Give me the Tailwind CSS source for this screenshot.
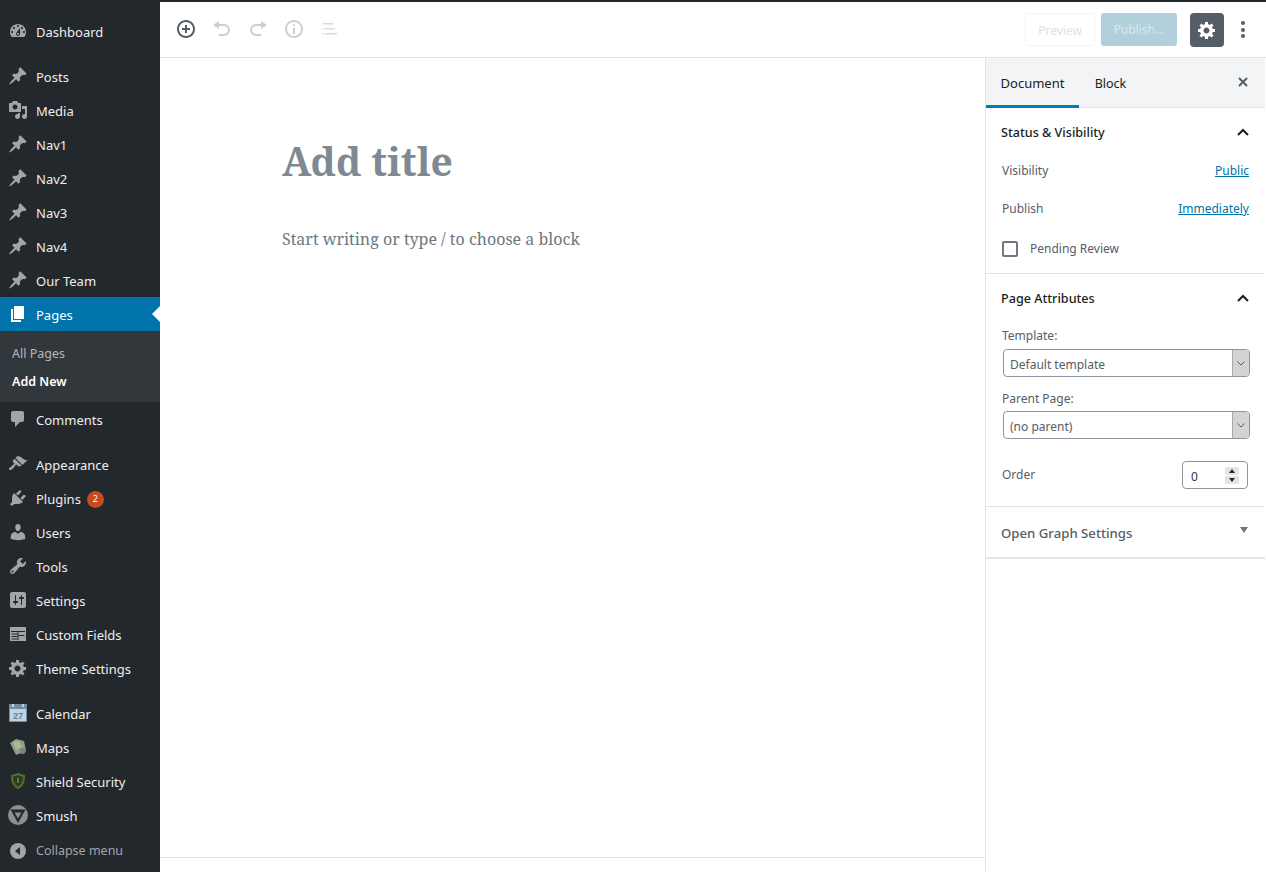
<!DOCTYPE html>
<html><head><meta charset="utf-8">
<script src="https://cdn.jsdelivr.net/npm/@tailwindcss/browser@4"></script>
</head>
<body class="m-0 overflow-hidden bg-white font-['Noto_Sans',sans-serif]">
<div class="flex h-[872px] w-[1266px] overflow-hidden">
  <!-- Admin menu -->
  <nav class="flex w-[160px] shrink-0 flex-col bg-[#23282d] pt-[14px] text-[13px] text-[#eeeeee]">
    <a class="flex h-[34px] items-center"><svg class="ml-[8px] mr-[8px] size-[20px] fill-[#a0a5aa]" viewBox="0 0 20 20"><path fill-rule="evenodd" d="M3.76 16h12.48c1.1-1.37 1.76-3.11 1.76-5 0-4.42-3.58-8-8-8s-8 3.58-8 8c0 1.89.66 3.63 1.76 5zM10 4c.55 0 1 .45 1 1s-.45 1-1 1-1-.45-1-1 .45-1 1-1zM6 6c.55 0 1 .45 1 1s-.45 1-1 1-1-.45-1-1 .45-1 1-1zm8 0c.55 0 1 .45 1 1s-.45 1-1 1-1-.45-1-1 .45-1 1-1zm-5.37 5.55L12 7v6c0 1.1-.9 2-2 2s-2-.9-2-2c0-.57.24-1.08.63-1.45zM4 10c.55 0 1 .45 1 1s-.45 1-1 1-1-.45-1-1 .45-1 1-1zm12 0c.55 0 1 .45 1 1s-.45 1-1 1-1-.45-1-1 .45-1 1-1zm-5 3c0-.55-.45-1-1-1s-1 .45-1 1 .45 1 1 1 1-.45 1-1z"/></svg><span class="mt-[4px]">Dashboard</span></a>
    <div class="h-[11px]"></div>
    <a class="flex h-[34px] items-center"><svg class="ml-[8px] mr-[8px] size-[20px] fill-[#a0a5aa]" viewBox="0 0 20 20"><path d="M10.44 3.02l1.82-1.82 6.36 6.35-1.83 1.82c-1.05-.68-2.48-.57-3.41.36l-.75.75c-.92.93-1.04 2.35-.35 3.41l-1.83 1.82-2.41-2.41-2.8 2.79c-.42.42-3.38 2.71-3.8 2.29s1.86-3.39 2.28-3.81l2.79-2.79L4.1 9.36l1.83-1.82c1.05.69 2.48.57 3.4-.36l.75-.75c.93-.92 1.05-2.35.36-3.41z"/></svg><span class="mt-[4px]">Posts</span></a>
    <a class="flex h-[34px] items-center"><svg class="ml-[8px] mr-[8px] size-[20px] fill-[#a0a5aa]" viewBox="0 0 20 20"><path fill-rule="evenodd" d="M13 11V4c0-.55-.45-1-1-1h-1.67L9 1H5L3.67 3H2c-.55 0-1 .45-1 1v7c0 .55.45 1 1 1h10c.55 0 1-.45 1-1zM7 4.5c1.38 0 2.5 1.12 2.5 2.5S8.38 9.5 7 9.5 4.5 8.38 4.5 7 5.62 4.5 7 4.5zM14 6h5v10.5c0 1.38-1.12 2.5-2.5 2.5S14 17.88 14 16.5s1.12-2.5 2.5-2.5c.17 0 .34.02.5.05V9h-3V6zm-4 8.05V13h2v3.5c0 1.38-1.12 2.5-2.5 2.5S7 17.88 7 16.5 8.12 14 9.5 14c.17 0 .34.02.5.05z"/></svg><span class="mt-[4px]">Media</span></a>
    <a class="flex h-[34px] items-center"><svg class="ml-[8px] mr-[8px] size-[20px] fill-[#a0a5aa]" viewBox="0 0 20 20"><path d="M10.44 3.02l1.82-1.82 6.36 6.35-1.83 1.82c-1.05-.68-2.48-.57-3.41.36l-.75.75c-.92.93-1.04 2.35-.35 3.41l-1.83 1.82-2.41-2.41-2.8 2.79c-.42.42-3.38 2.71-3.8 2.29s1.86-3.39 2.28-3.81l2.79-2.79L4.1 9.36l1.83-1.82c1.05.69 2.48.57 3.4-.36l.75-.75c.93-.92 1.05-2.35.36-3.41z"/></svg><span class="mt-[4px]">Nav1</span></a>
    <a class="flex h-[34px] items-center"><svg class="ml-[8px] mr-[8px] size-[20px] fill-[#a0a5aa]" viewBox="0 0 20 20"><path d="M10.44 3.02l1.82-1.82 6.36 6.35-1.83 1.82c-1.05-.68-2.48-.57-3.41.36l-.75.75c-.92.93-1.04 2.35-.35 3.41l-1.83 1.82-2.41-2.41-2.8 2.79c-.42.42-3.38 2.71-3.8 2.29s1.86-3.39 2.28-3.81l2.79-2.79L4.1 9.36l1.83-1.82c1.05.69 2.48.57 3.4-.36l.75-.75c.93-.92 1.05-2.35.36-3.41z"/></svg><span class="mt-[4px]">Nav2</span></a>
    <a class="flex h-[34px] items-center"><svg class="ml-[8px] mr-[8px] size-[20px] fill-[#a0a5aa]" viewBox="0 0 20 20"><path d="M10.44 3.02l1.82-1.82 6.36 6.35-1.83 1.82c-1.05-.68-2.48-.57-3.41.36l-.75.75c-.92.93-1.04 2.35-.35 3.41l-1.83 1.82-2.41-2.41-2.8 2.79c-.42.42-3.38 2.71-3.8 2.29s1.86-3.39 2.28-3.81l2.79-2.79L4.1 9.36l1.83-1.82c1.05.69 2.48.57 3.4-.36l.75-.75c.93-.92 1.05-2.35.36-3.41z"/></svg><span class="mt-[4px]">Nav3</span></a>
    <a class="flex h-[34px] items-center"><svg class="ml-[8px] mr-[8px] size-[20px] fill-[#a0a5aa]" viewBox="0 0 20 20"><path d="M10.44 3.02l1.82-1.82 6.36 6.35-1.83 1.82c-1.05-.68-2.48-.57-3.41.36l-.75.75c-.92.93-1.04 2.35-.35 3.41l-1.83 1.82-2.41-2.41-2.8 2.79c-.42.42-3.38 2.71-3.8 2.29s1.86-3.39 2.28-3.81l2.79-2.79L4.1 9.36l1.83-1.82c1.05.69 2.48.57 3.4-.36l.75-.75c.93-.92 1.05-2.35.36-3.41z"/></svg><span class="mt-[4px]">Nav4</span></a>
    <a class="flex h-[34px] items-center"><svg class="ml-[8px] mr-[8px] size-[20px] fill-[#a0a5aa]" viewBox="0 0 20 20"><path d="M10.44 3.02l1.82-1.82 6.36 6.35-1.83 1.82c-1.05-.68-2.48-.57-3.41.36l-.75.75c-.92.93-1.04 2.35-.35 3.41l-1.83 1.82-2.41-2.41-2.8 2.79c-.42.42-3.38 2.71-3.8 2.29s1.86-3.39 2.28-3.81l2.79-2.79L4.1 9.36l1.83-1.82c1.05.69 2.48.57 3.4-.36l.75-.75c.93-.92 1.05-2.35.36-3.41z"/></svg><span class="mt-[4px]">Our Team</span></a>
    <a class="relative flex h-[34px] items-center bg-[#0073aa] text-white"><svg class="ml-[8px] mr-[8px] size-[20px] fill-white" viewBox="0 0 20 20"><path d="M6 15V2h10v13H6zm-1 1h8v2H3V5h2v11z"/></svg><span class="mt-[4px]">Pages</span><span class="absolute right-0 top-[9px] size-0 border-y-[8px] border-r-[8px] border-y-transparent border-r-white"></span></a>
    <div class="flex h-[71px] flex-col bg-[#32373c] pt-[9px] text-[12.5px]">
      <a class="flex h-[28px] items-center pl-[12px] text-[#b4b9be]">All Pages</a>
      <a class="flex h-[28px] items-center pl-[12px] font-semibold text-white">Add New</a>
    </div>
    <a class="flex h-[34px] items-center"><svg class="ml-[8px] mr-[8px] size-[20px] fill-[#a0a5aa]" viewBox="0 0 20 20"><path d="M5 2h9c1.1 0 2 .9 2 2v7c0 1.1-.9 2-2 2h-2l-5 5v-5H5c-1.1 0-2-.9-2-2V4c0-1.1.9-2 2-2z"/></svg><span class="mt-[4px]">Comments</span></a>
    <div class="h-[11px]"></div>
    <a class="flex h-[34px] items-center"><svg class="ml-[8px] mr-[8px] size-[20px] fill-[#a0a5aa]" viewBox="0 0 20 20"><path d="M14.48 11.06L7.41 3.99l1.5-1.5c.5-.56 2.3-.47 3.51.32 1.21.8 1.43 1.28 2.91 2.1 1.18.64 2.45 1.26 4.45.85zm-.71.71L6.7 4.7 4.93 6.47c-.39.39-.39 1.02 0 1.41l1.06 1.06c.39.39.39 1.03 0 1.42-.6.6-1.43 1.11-2.21 1.69-.35.26-.7.53-1.01.84C1.43 13.23.5 14.99 1.29 15.78c.8.8 2.54-.13 3.9-1.48.3-.31.58-.66.84-1.01.57-.78 1.09-1.61 1.69-2.21.39-.39 1.02-.39 1.41 0l1.06 1.06c.39.39 1.02.39 1.41 0z"/></svg><span class="mt-[4px]">Appearance</span></a>
    <a class="flex h-[34px] items-center"><svg class="ml-[8px] mr-[8px] size-[20px] fill-[#a0a5aa]" viewBox="0 0 20 20"><path d="M13.11 4.36L9.87 7.6 8 5.73l3.24-3.24c.35-.34 1.05-.2 1.56.32.52.51.66 1.21.31 1.55zm-8 1.77l.91-1.12 9.01 9.01-1.19.84c-.71.71-2.63 1.16-3.82 1.16H6.14L4.9 17.26c-.59.59-1.54.59-2.12 0-.59-.58-.59-1.53 0-2.12l1.24-1.24v-3.88c0-1.13.4-3.19 1.09-3.89zm7.26 3.97l3.24-3.24c.34-.35 1.04-.21 1.55.31.52.51.66 1.21.31 1.55l-3.24 3.25z"/></svg><span class="mt-[4px]">Plugins</span><span class="ml-[6px] mt-[2px] flex size-[17px] items-center justify-center rounded-full bg-[#ca4a1f] text-[9px] text-white">2</span></a>
    <a class="flex h-[34px] items-center"><svg class="ml-[8px] mr-[8px] size-[20px] fill-[#a0a5aa]" viewBox="0 0 20 20"><path d="M10 9.25c-2.27 0-2.73-3.44-2.73-3.44C7 4.02 7.82 2 9.97 2c2.16 0 2.98 2.02 2.71 3.81 0 0-.41 3.44-2.68 3.44zm0 2.57L12.72 10c2.39 0 4.52 2.33 4.52 4.53v2.49s-3.65 1.13-7.24 1.13c-3.65 0-7.24-1.13-7.24-1.13v-2.49c0-2.25 1.94-4.48 4.47-4.48z"/></svg><span class="mt-[4px]">Users</span></a>
    <a class="flex h-[34px] items-center"><svg class="ml-[8px] mr-[8px] size-[20px] fill-[#a0a5aa]" viewBox="0 0 20 20"><path fill-rule="evenodd" d="M16.68 9.77c-1.34 1.34-3.3 1.67-4.95.99l-5.41 6.52c-.99.99-2.59.99-3.58 0s-.99-2.59 0-3.57l6.52-5.42c-.68-1.65-.35-3.61.99-4.95 1.28-1.28 3.12-1.62 4.72-1.06l-2.89 2.89 2.82 2.82 2.86-2.87c.53 1.58.18 3.39-1.08 4.65zM3.81 16.21c.4.39 1.03.39 1.42 0 .4-.4.4-1.03 0-1.43-.39-.39-1.02-.39-1.42 0-.39.4-.39 1.03 0 1.43z"/></svg><span class="mt-[4px]">Tools</span></a>
    <a class="flex h-[34px] items-center"><svg class="ml-[8px] mr-[8px] size-[20px] fill-[#a0a5aa]" viewBox="0 0 20 20"><path fill-rule="evenodd" d="M18 16V4c0-1.1-.9-2-2-2H4c-1.1 0-2 .9-2 2v12c0 1.1.9 2 2 2h12c1.1 0 2-.9 2-2zM8 11h1c.55 0 1 .45 1 1s-.45 1-1 1H8v1.5c0 .28-.22.5-.5.5s-.5-.22-.5-.5V13H6c-.55 0-1-.45-1-1s.45-1 1-1h1V5.5c0-.28.22-.5.5-.5s.5.22.5.5V11zm5-2h-1c-.55 0-1-.45-1-1s.45-1 1-1h1V5.5c0-.28.22-.5.5-.5s.5.22.5.5V7h1c.55 0 1 .45 1 1s-.45 1-1 1h-1v5.5c0 .28-.22.5-.5.5s-.5-.22-.5-.5V9z"/></svg><span class="mt-[4px]">Settings</span></a>
    <a class="flex h-[34px] items-center"><svg class="ml-[8px] mr-[8px] size-[20px]" viewBox="0 0 20 20"><rect x="2" y="3" width="16" height="14" fill="#a0a5aa"/><path d="M3 7.500h14M3.500 10h6M3.500 12.500h6M3.500 15h6M10 7.500v8.500M10.500 11.500h6" stroke="#23282d" fill="none"/><rect x="3" y="4" width="14" height="3" fill="#a0a5aa"/></svg><span class="mt-[4px]">Custom Fields</span></a>
    <a class="flex h-[34px] items-center"><svg class="ml-[8px] mr-[8px] size-[20px] fill-[#a0a5aa]" viewBox="0 0 20 20"><path fill-rule="evenodd" d="M18 12h-2.18c-.17.7-.44 1.35-.81 1.93l1.54 1.54-2.1 2.1-1.54-1.54c-.58.36-1.23.63-1.91.79V19H8v-2.18c-.68-.16-1.33-.43-1.91-.79l-1.54 1.54-2.12-2.12 1.54-1.54c-.36-.58-.63-1.23-.79-1.91H1V9.03h2.17c.16-.7.44-1.35.8-1.94L2.43 5.55l2.1-2.1 1.54 1.54c.58-.37 1.24-.64 1.93-.81V2h3v2.18c.68.16 1.33.43 1.91.79l1.54-1.54 2.12 2.12-1.54 1.54c.36.59.64 1.24.8 1.94H18V12zm-8.5 1.5c1.66 0 3-1.34 3-3s-1.34-3-3-3-3 1.34-3 3 1.34 3 3 3z"/></svg><span class="mt-[4px]">Theme Settings</span></a>
    <div class="h-[11px]"></div>
    <a class="flex h-[34px] items-center"><svg class="ml-[9px] mr-[9px] size-[18px]" viewBox="0 0 18 18"><rect width="18" height="18" fill="#6f8ea8"/><rect x="1" y="5" width="16" height="12" fill="#c4d2de"/><rect x="3" y="0" width="2" height="3" fill="#c4d2de"/><rect x="13" y="0" width="2" height="3" fill="#c4d2de"/><text x="9" y="15" text-anchor="middle" font-size="9" font-weight="700" fill="#5d7f9b" font-family="Liberation Sans">27</text></svg><span class="mt-[4px]">Calendar</span></a>
    <a class="flex h-[34px] items-center"><svg class="ml-[8px] mr-[8px] size-[20px]" viewBox="0 0 20 20"><path d="M2 6l6-4 8 2 2 10-10 4z" fill="#8f9f82"/><path d="M5 5l6-1 3 6-6 3z" fill="#aab79d"/><circle cx="14.500" cy="14" r="3" fill="#7d8186"/></svg><span class="mt-[4px]">Maps</span></a>
    <a class="flex h-[34px] items-center"><svg class="ml-[8px] mr-[8px] size-[20px]" viewBox="0 0 20 20"><path d="M10 3l6 2c0 6-1.500 10-6 12-4.500-2-6-6-6-12z" fill="#2b3a24" stroke="#4f7029" stroke-width="2"/><rect x="9.200" y="7" width="1.600" height="5" fill="#6f8f3f"/></svg><span class="mt-[4px]">Shield Security</span></a>
    <a class="flex h-[34px] items-center"><svg class="ml-[8px] mr-[8px] size-[20px]" viewBox="0 0 20 20"><circle cx="10" cy="10" r="10" fill="#8c9094"/><path d="M2.500 4.500h15L10 18z" fill="#23282d"/><path d="M6.500 7.500h7L10 13.500z" fill="#8c9094"/></svg><span class="mt-[4px]">Smush</span></a>
    <a class="mt-[2px] flex h-[34px] items-center text-[12.5px] text-[#a0a5aa]"><svg class="ml-[8px] mr-[8px] size-[20px]" viewBox="0 0 20 20"><circle cx="10" cy="10" r="8" fill="#a0a5aa"/><path d="M12 6v8l-5-4z" fill="#23282d"/></svg>Collapse menu</a>
  </nav>

  <!-- Editor -->
  <div class="flex min-w-0 flex-1 flex-col border-t-2 border-[#23282d]">
    <header class="flex h-[56px] shrink-0 items-center border-b border-[#e2e4e7] bg-white pl-[16px] pr-[21px]">
      <svg class="mb-[1px] size-[20px] fill-[#555d66]" viewBox="0 0 20 20"><path d="M10 1c-5 0-9 4-9 9s4 9 9 9 9-4 9-9-4-9-9-9zm0 16c-3.900 0-7-3.100-7-7s3.100-7 7-7 7 3.100 7 7-3.100 7-7 7zm1-11H9v3H6v2h3v3h2v-3h3V9h-3V6z"/></svg>
      <svg class="mb-[1px] ml-[16px] size-[20px] fill-[#ccd0d4]" viewBox="0 0 20 20"><path d="M12 5H7V2L1 6l6 4V7h5c2.200 0 4 1.800 4 4s-1.800 4-4 4H7v2h5c3.300 0 6-2.700 6-6s-2.700-6-6-6z"/></svg>
      <svg class="mb-[1px] ml-[16px] size-[20px] fill-[#ccd0d4]" viewBox="0 0 20 20"><path d="M8 5h5V2l6 4-6 4V7H8c-2.200 0-4 1.800-4 4s1.800 4 4 4h5v2H8c-3.300 0-6-2.700-6-6s2.700-6 6-6z"/></svg>
      <svg class="mb-[1px] ml-[16px] size-[20px] fill-[#ccd0d4]" viewBox="0 0 20 20"><path d="M9 15h2V9H9v6zm1-10c-.5 0-1 .5-1 1s.5 1 1 1 1-.5 1-1-.5-1-1-1zm0-4c-5 0-9 4-9 9s4 9 9 9 9-4 9-9-4-9-9-9zm0 16c-3.900 0-7-3.100-7-7s3.100-7 7-7 7 3.100 7 7-3.100 7-7 7z"/></svg>
      <svg class="mb-[1px] ml-[16px] size-[20px] fill-[#d8dadd]" viewBox="0 0 20 20"><path d="M3 4h10v1.500H3zM5 9h10v1.500H5zM5 14h12v1.500H5z"/><rect x="2" y="9" width="1.500" height="1.500"/><rect x="2" y="14" width="1.500" height="1.500"/></svg>
      <div class="ml-auto flex h-[33px] w-[70px] items-center justify-center rounded-[3px] border border-[#f5f5f5] pt-[3px] text-[12px] text-[#dfe1e3]">Preview</div>
      <div class="ml-[6px] flex h-[33px] w-[76px] items-center justify-center rounded-[3px] bg-[#b2d0dc] text-[12px] text-[#d9e9ef]">Publish...</div>
      <div class="ml-[13px] flex size-[34px] items-center justify-center rounded-[4px] bg-[#555d66]"><svg class="size-[20px] fill-white" viewBox="0 0 20 20"><path fill-rule="evenodd" d="M18 12h-2.180c-.17.7-.44 1.350-.81 1.930l1.540 1.540-2.100 2.100-1.540-1.540c-.58.36-1.230.63-1.910.79V19H8v-2.180c-.68-.16-1.330-.43-1.910-.79l-1.540 1.540-2.120-2.120 1.540-1.540c-.36-.58-.63-1.230-.79-1.910H1V9.030h2.170c.16-.7.44-1.350.8-1.940L2.430 5.550l2.100-2.100 1.540 1.540c.58-.37 1.240-.64 1.930-.81V2h3v2.180c.68.16 1.330.43 1.910.79l1.540-1.540 2.120 2.120-1.540 1.540c.36.59.64 1.240.8 1.940H18V12zm-8.500 1.500c1.660 0 3-1.340 3-3s-1.340-3-3-3-3 1.340-3 3 1.340 3 3 3z"/></svg></div>
      <div class="ml-[17px] flex w-[4px] flex-col gap-[2.5px]"><span class="size-[4px] rounded-full bg-[#555d66]"></span><span class="size-[4px] rounded-full bg-[#555d66]"></span><span class="size-[4px] rounded-full bg-[#555d66]"></span></div>
    </header>
    <div class="flex min-h-0 flex-1">
      <main class="flex min-w-0 flex-1 flex-col bg-white">
        <div class="flex-1 pl-[122px] pt-[73px]">
          <h1 class="font-['Noto_Serif','DejaVu_Serif',serif] text-[39px] font-bold leading-[60px] text-[#7e8993]">Add title</h1>
          <p class="mt-[35px] font-['Noto_Serif','DejaVu_Serif',serif] text-[16px] leading-[26px] text-[#6c7781]">Start writing or type / to choose a block</p>
        </div>
        <div class="h-[15px] border-t border-[#e2e4e7]"></div>
      </main>
      <aside class="w-[281px] shrink-0 border-l border-[#e2e4e7] bg-white pr-px text-[12px] text-[#555d66]">
        <div class="flex h-[50px] items-stretch border-b border-[#e2e4e7] bg-[#f3f4f5] text-[13px] text-[#191e23]">
          <div class="-mb-px flex w-[93px] items-center justify-center border-b-[3px] border-[#007cba] pt-[5px]">Document</div>
          <div class="flex w-[63px] items-center justify-center pt-[4px] text-[12.5px]">Block</div>
          <svg class="ml-auto mr-[16px] mt-[18px] size-[12px] stroke-[#555d66] stroke-2" viewBox="0 0 12 12"><path d="M2 2l8 8M10 2l-8 8"/></svg>
        </div>
        <section class="h-[166px] border-b border-[#e2e4e7] pl-[15px] pr-[16px]">
          <div class="flex h-[49px] items-center justify-between text-[12.6px] font-medium text-[#191e23]"><span class="mt-[2px]">Status &amp; Visibility</span><svg class="size-[12px] fill-none stroke-[#191e23] stroke-2" viewBox="0 0 12 12"><path d="M1 8l5-5 5 5"/></svg></div>
          <div class="flex h-[28px] items-center justify-between pl-px"><span>Visibility</span><a class="text-[#0073aa] underline">Public</a></div>
          <div class="mt-[10px] flex h-[28px] items-center justify-between pl-px"><span>Publish</span><a class="text-[#0073aa] underline">Immediately</a></div>
          <div class="mt-[18px] flex h-[16px] items-center pl-px"><span class="size-[16px] rounded-[2px] border-2 border-[#6c7781]"></span><span class="ml-[12px]">Pending Review</span></div>
        </section>
        <section class="h-[233px] border-b border-[#e2e4e7] pl-[15px] pr-[16px]">
          <div class="flex h-[49px] items-center justify-between text-[12.6px] font-medium text-[#191e23]"><span class="mt-[2px]">Page Attributes</span><svg class="size-[12px] fill-none stroke-[#191e23] stroke-2" viewBox="0 0 12 12"><path d="M1 8l5-5 5 5"/></svg></div>
          <div class="pl-px pt-[1px] leading-[24px]">Template:</div>
          <div class="ml-[2px] mt-[1px] flex h-[28px] w-[247px] overflow-hidden rounded-[4px] border border-[#8d96a0] pl-[6px] leading-[28px]"><span class="mt-[1px]">Default template</span><span class="ml-auto flex w-[17px] items-center justify-center border-l border-[#a9a9a9] bg-[#d3d3d3]"><svg class="size-[12px] fill-none stroke-[#555d66]" viewBox="0 0 12 12"><path d="M2.500 4.500L6 8l3.500-3.500"/></svg></span></div>
          <div class="mt-[13px] pl-px leading-[18px]">Parent Page:</div>
          <div class="ml-[2px] mt-[3px] flex h-[28px] w-[247px] overflow-hidden rounded-[4px] border border-[#8d96a0] pl-[6px] leading-[28px]"><span class="mt-[1px]">(no parent)</span><span class="ml-auto flex w-[17px] items-center justify-center border-l border-[#a9a9a9] bg-[#d3d3d3]"><svg class="size-[12px] fill-none stroke-[#555d66]" viewBox="0 0 12 12"><path d="M2.500 4.500L6 8l3.500-3.500"/></svg></span></div>
          <div class="mt-[22px] flex h-[28px] items-center justify-between pl-px"><span>Order</span><div class="mr-px flex h-[28px] w-[66px] items-center rounded-[4px] border border-[#8d96a0] pl-[8px] pr-[8px] text-[#32373c]"><span class="mt-[3px]">0</span><span class="ml-auto flex flex-col gap-px"><span class="flex h-[8px] w-[14px] items-center justify-center bg-[#e5e5e5]"><span class="size-0 border-x-[3px] border-b-[4px] border-x-transparent border-b-[#23282d]"></span></span><span class="flex h-[8px] w-[14px] items-center justify-center bg-[#e5e5e5]"><span class="size-0 border-x-[3px] border-t-[4px] border-x-transparent border-t-[#23282d]"></span></span></span></div></div>
        </section>
        <section class="flex h-[52px] items-center justify-between border-b-2 border-[#e2e4e7] pl-[15px] pr-[17px] text-[13.2px] font-medium text-[#555d66]"><span class="mt-[4px]">Open Graph Settings</span><span class="mb-[4px] size-0 border-x-[4px] border-t-[6px] border-x-transparent border-t-[#6c7781]"></span></section>
      </aside>
    </div>
  </div>
</div>
</body></html>
